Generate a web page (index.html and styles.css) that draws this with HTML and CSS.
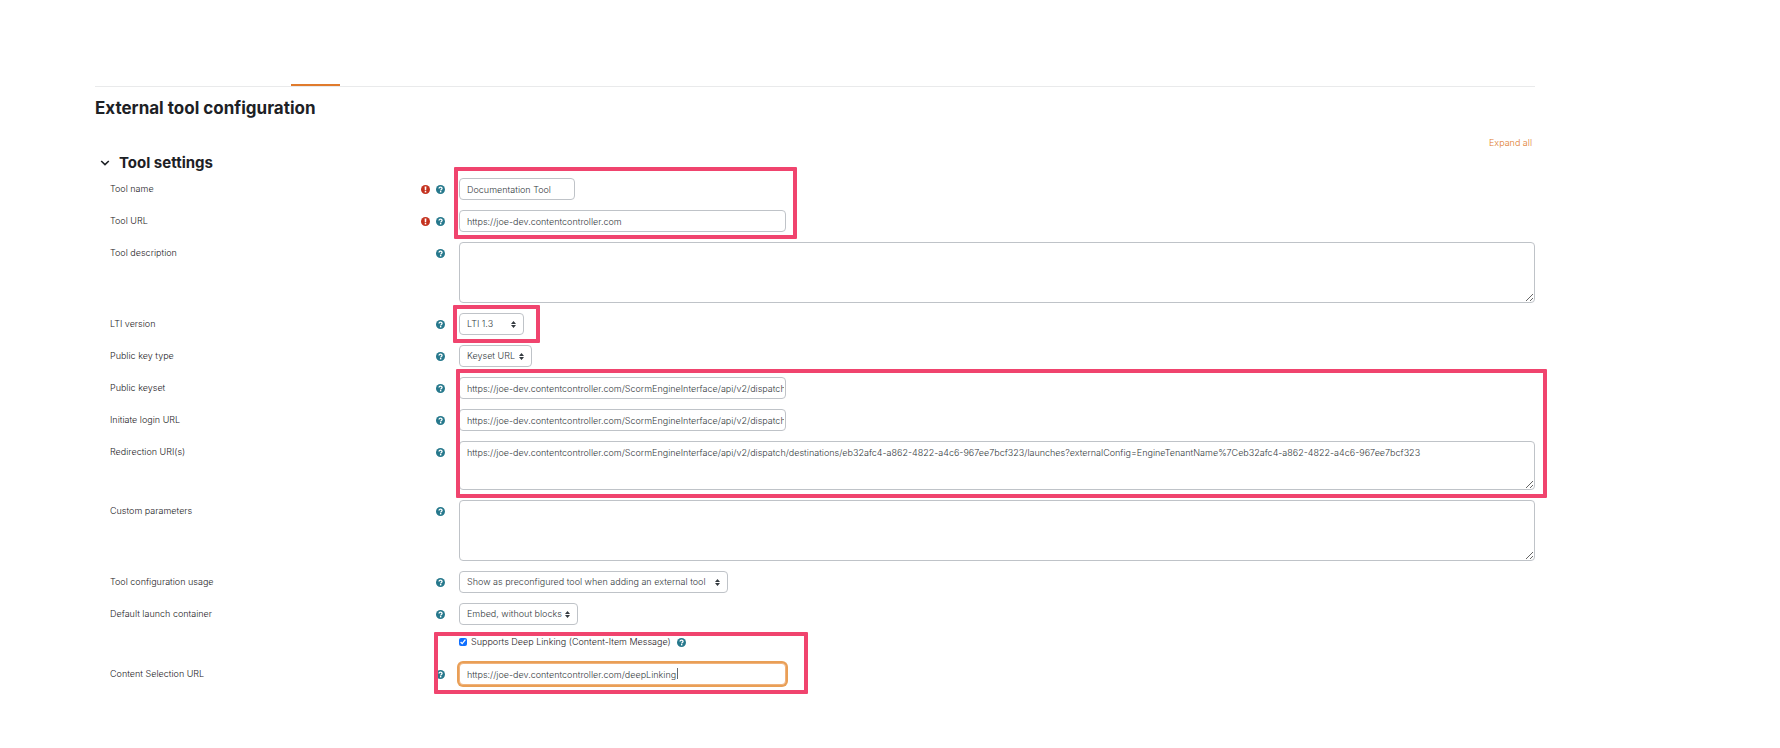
FILE: index.html
```html
<!DOCTYPE html>
<html lang="en">
<head>
<meta charset="utf-8">
<title>External tool configuration</title>
<link rel="stylesheet" href="styles.css">
</head>
<body>
<svg class="defs" aria-hidden="true">
  <symbol id="help" viewBox="0 0 18 18">
    <circle cx="9" cy="9" r="9" fill="#26788c"/>
    <path d="M6 7.1C6.1 5.3 7.4 4.3 9.1 4.3c1.7 0 3 1 3 2.6 0 2-2.7 2.1-2.7 3.9" fill="none" stroke="#fff" stroke-width="2.6"/>
    <rect x="7.9" y="12" width="2.8" height="2.8" fill="#fff"/>
  </symbol>
  <symbol id="required" viewBox="0 0 18 18">
    <circle cx="9" cy="9" r="9" fill="#c4321f"/>
    <path d="M7.2 3h3.6l-.4 7.6H7.6z" fill="#fff"/>
    <rect x="7.5" y="11.8" width="3" height="3" fill="#fff"/>
  </symbol>
  <symbol id="sort" viewBox="0 0 5 7">
    <path d="M2.5 0 5 3H0zM2.5 7 0 4h5z" fill="#343a40"/>
  </symbol>
</svg>
<main class="page">
  <nav class="tabs"><span class="tab-active"></span></nav>
  <h1 class="title">External tool configuration</h1>
  <div class="actions"><a class="expand" href="#">Expand all</a></div>
  <form class="settings">
    <h2 class="section">
      <svg class="chevron" viewBox="0 0 10 6"><path d="M1.2 1 5 4.6 8.8 1" fill="none" stroke="#1d2125" stroke-width="1.6"/></svg>
      Tool settings
    </h2>

    <div class="group">
      <div class="row">
        <label class="label" for="name">Tool name</label>
        <span class="icons"><svg class="icon"><use href="#required"/></svg><svg class="icon"><use href="#help"/></svg></span>
        <input class="field short" id="name" type="text" value="Documentation Tool">
      </div>
      <div class="row">
        <label class="label" for="url">Tool URL</label>
        <span class="icons"><svg class="icon"><use href="#required"/></svg><svg class="icon"><use href="#help"/></svg></span>
        <input class="field long" id="url" type="text" value="https://joe-dev.contentcontroller.com">
      </div>
      <span class="mark mark-url"></span>
    </div>

    <div class="row">
      <label class="label" for="desc">Tool description</label>
      <span class="icons"><svg class="icon"><use href="#help"/></svg></span>
      <textarea class="field area" id="desc"></textarea>
    </div>

    <div class="group">
      <div class="row">
        <label class="label" for="lti">LTI version</label>
        <span class="icons"><svg class="icon"><use href="#help"/></svg></span>
        <span class="pick pick-lti"><select class="field" id="lti"><option>LTI 1.3</option></select><svg class="sort"><use href="#sort"/></svg></span>
      </div>
      <span class="mark mark-lti"></span>
    </div>

    <div class="row">
      <label class="label" for="keytype">Public key type</label>
      <span class="icons"><svg class="icon"><use href="#help"/></svg></span>
      <span class="pick pick-key"><select class="field" id="keytype"><option>Keyset URL</option></select><svg class="sort"><use href="#sort"/></svg></span>
    </div>

    <div class="group">
      <div class="row">
        <label class="label" for="keyset">Public keyset</label>
        <span class="icons"><svg class="icon"><use href="#help"/></svg></span>
        <input class="field long" id="keyset" type="text" value="https://joe-dev.contentcontroller.com/ScormEngineInterface/api/v2/dispatch">
      </div>
      <div class="row">
        <label class="label" for="login">Initiate login URL</label>
        <span class="icons"><svg class="icon"><use href="#help"/></svg></span>
        <input class="field long" id="login" type="text" value="https://joe-dev.contentcontroller.com/ScormEngineInterface/api/v2/dispatch">
      </div>
      <div class="row">
        <label class="label" for="redirect">Redirection URI(s)</label>
        <span class="icons"><svg class="icon"><use href="#help"/></svg></span>
        <textarea class="field area area-small" id="redirect">https://joe-dev.contentcontroller.com/ScormEngineInterface/api/v2/dispatch/destinations/eb32afc4-a862-4822-a4c6-967ee7bcf323/launches?externalConfig=EngineTenantName%7Ceb32afc4-a862-4822-a4c6-967ee7bcf323</textarea>
      </div>
      <span class="mark mark-keys"></span>
    </div>

    <div class="row">
      <label class="label" for="custom">Custom parameters</label>
      <span class="icons"><svg class="icon"><use href="#help"/></svg></span>
      <textarea class="field area" id="custom"></textarea>
    </div>
    <div class="row">
      <label class="label" for="usage">Tool configuration usage</label>
      <span class="icons"><svg class="icon"><use href="#help"/></svg></span>
      <span class="pick pick-usage"><select class="field" id="usage"><option>Show as preconfigured tool when adding an external tool</option></select><svg class="sort"><use href="#sort"/></svg></span>
    </div>
    <div class="row">
      <label class="label" for="launch">Default launch container</label>
      <span class="icons"><svg class="icon"><use href="#help"/></svg></span>
      <span class="pick pick-launch"><select class="field" id="launch"><option>Embed, without blocks</option></select><svg class="sort"><use href="#sort"/></svg></span>
    </div>

    <div class="group">
      <div class="row row-check">
        <span class="check">
          <input class="tick" id="deep" type="checkbox" checked>
          <label for="deep">Supports Deep Linking (Content-Item Message)</label>
          <svg class="icon"><use href="#help"/></svg>
        </span>
      </div>
      <div class="row">
        <label class="label" for="content">Content Selection URL</label>
        <span class="icons"><svg class="icon"><use href="#help"/></svg></span>
        <span class="entry"><input class="field long focused" id="content" type="text" value="https://joe-dev.contentcontroller.com/deepLinking"><span class="caret"></span></span>
      </div>
      <span class="mark mark-deep"></span>
    </div>
  </form>
</main>
</body>
</html>
```
FILE: styles.css
```css
* { box-sizing: border-box; }

body {
  margin: 0;
  background: #fff;
  color: #1d2125;
  font: 300 9px/14px Inter, "Liberation Sans", sans-serif;
}

.defs { position: absolute; width: 0; height: 0; }

.page { padding: 84px 245px 40px 95px; }

.tabs { height: 3px; border-bottom: 1px solid #e9eaeb; }
.tab-active { display: block; width: 49px; height: 2px; margin-left: 196px; background: #e07b2c; }

.title, .section { color: #1d2125; font-weight: 650; }
.title { margin: 9px 0 0; font-size: 17px; line-height: 24px; }

.actions { display: flex; justify-content: flex-end; margin-top: 16px; padding-right: 3px; }
.expand { color: #e07b2c; text-decoration: none; }

.settings, .group { display: flex; flex-direction: column; gap: 10px; }
.group { position: relative; }

.section {
  display: flex;
  align-items: center;
  gap: 9px;
  margin: 2px 0 -6px;
  padding-left: 5px;
  font-size: 15px;
  line-height: 22px;
}
.chevron { width: 10px; height: 6px; }

.row {
  display: grid;
  grid-template-columns: 270px 51px 1fr;
  column-gap: 14px;
  align-items: start;
  padding-left: 15px;
}
.label { line-height: 22px; }
.icons { display: flex; justify-content: flex-end; align-items: center; gap: 6px; height: 22px; }
.icon { display: block; width: 9px; height: 9px; }

.field {
  display: block;
  height: 22px;
  margin: 0;
  padding: 0 1px 0 7px;
  border: 1px solid #bfc3c8;
  border-radius: 4px;
  outline: 0;
  background: #fff;
  color: #343a40;
  font: inherit;
}
.short { width: 116px; }
.long { width: 327px; }
.area { width: 100%; height: 61px; padding-top: 4px; resize: vertical; }
.area-small { height: 49px; }

.pick { position: relative; }
.pick .field { width: 100%; appearance: none; }
.sort { position: absolute; top: 8px; right: 8px; width: 5px; height: 7px; }
.pick-lti { width: 65px; }
.pick-key { width: 73px; }
.pick-usage { width: 269px; }
.pick-launch { width: 119px; }

.row-check { height: 18px; }
.check { grid-column: 3; display: flex; align-items: center; }
.tick { width: 8px; height: 8px; margin: 0 4px 0 0; accent-color: #0f6fff; }
.check .icon { margin-left: 6px; }

.entry { position: relative; }
.focused { border-color: #f0b27c; box-shadow: 0 0 0 2px #e99f56; }
.caret { position: absolute; top: 5px; left: 218px; width: 1px; height: 11px; background: #63696f; }

.mark { position: absolute; border: 4px solid #f0446e; border-radius: 1px; pointer-events: none; }
.mark-url { top: -11px; bottom: -7px; left: 359px; width: 343px; }
.mark-lti { top: -8px; bottom: -8px; left: 358px; width: 87px; }
.mark-keys { top: -8px; bottom: -8px; left: 361px; right: -12px; }
.mark-deep { top: -3px; bottom: -9px; left: 339px; width: 374px; }
```
